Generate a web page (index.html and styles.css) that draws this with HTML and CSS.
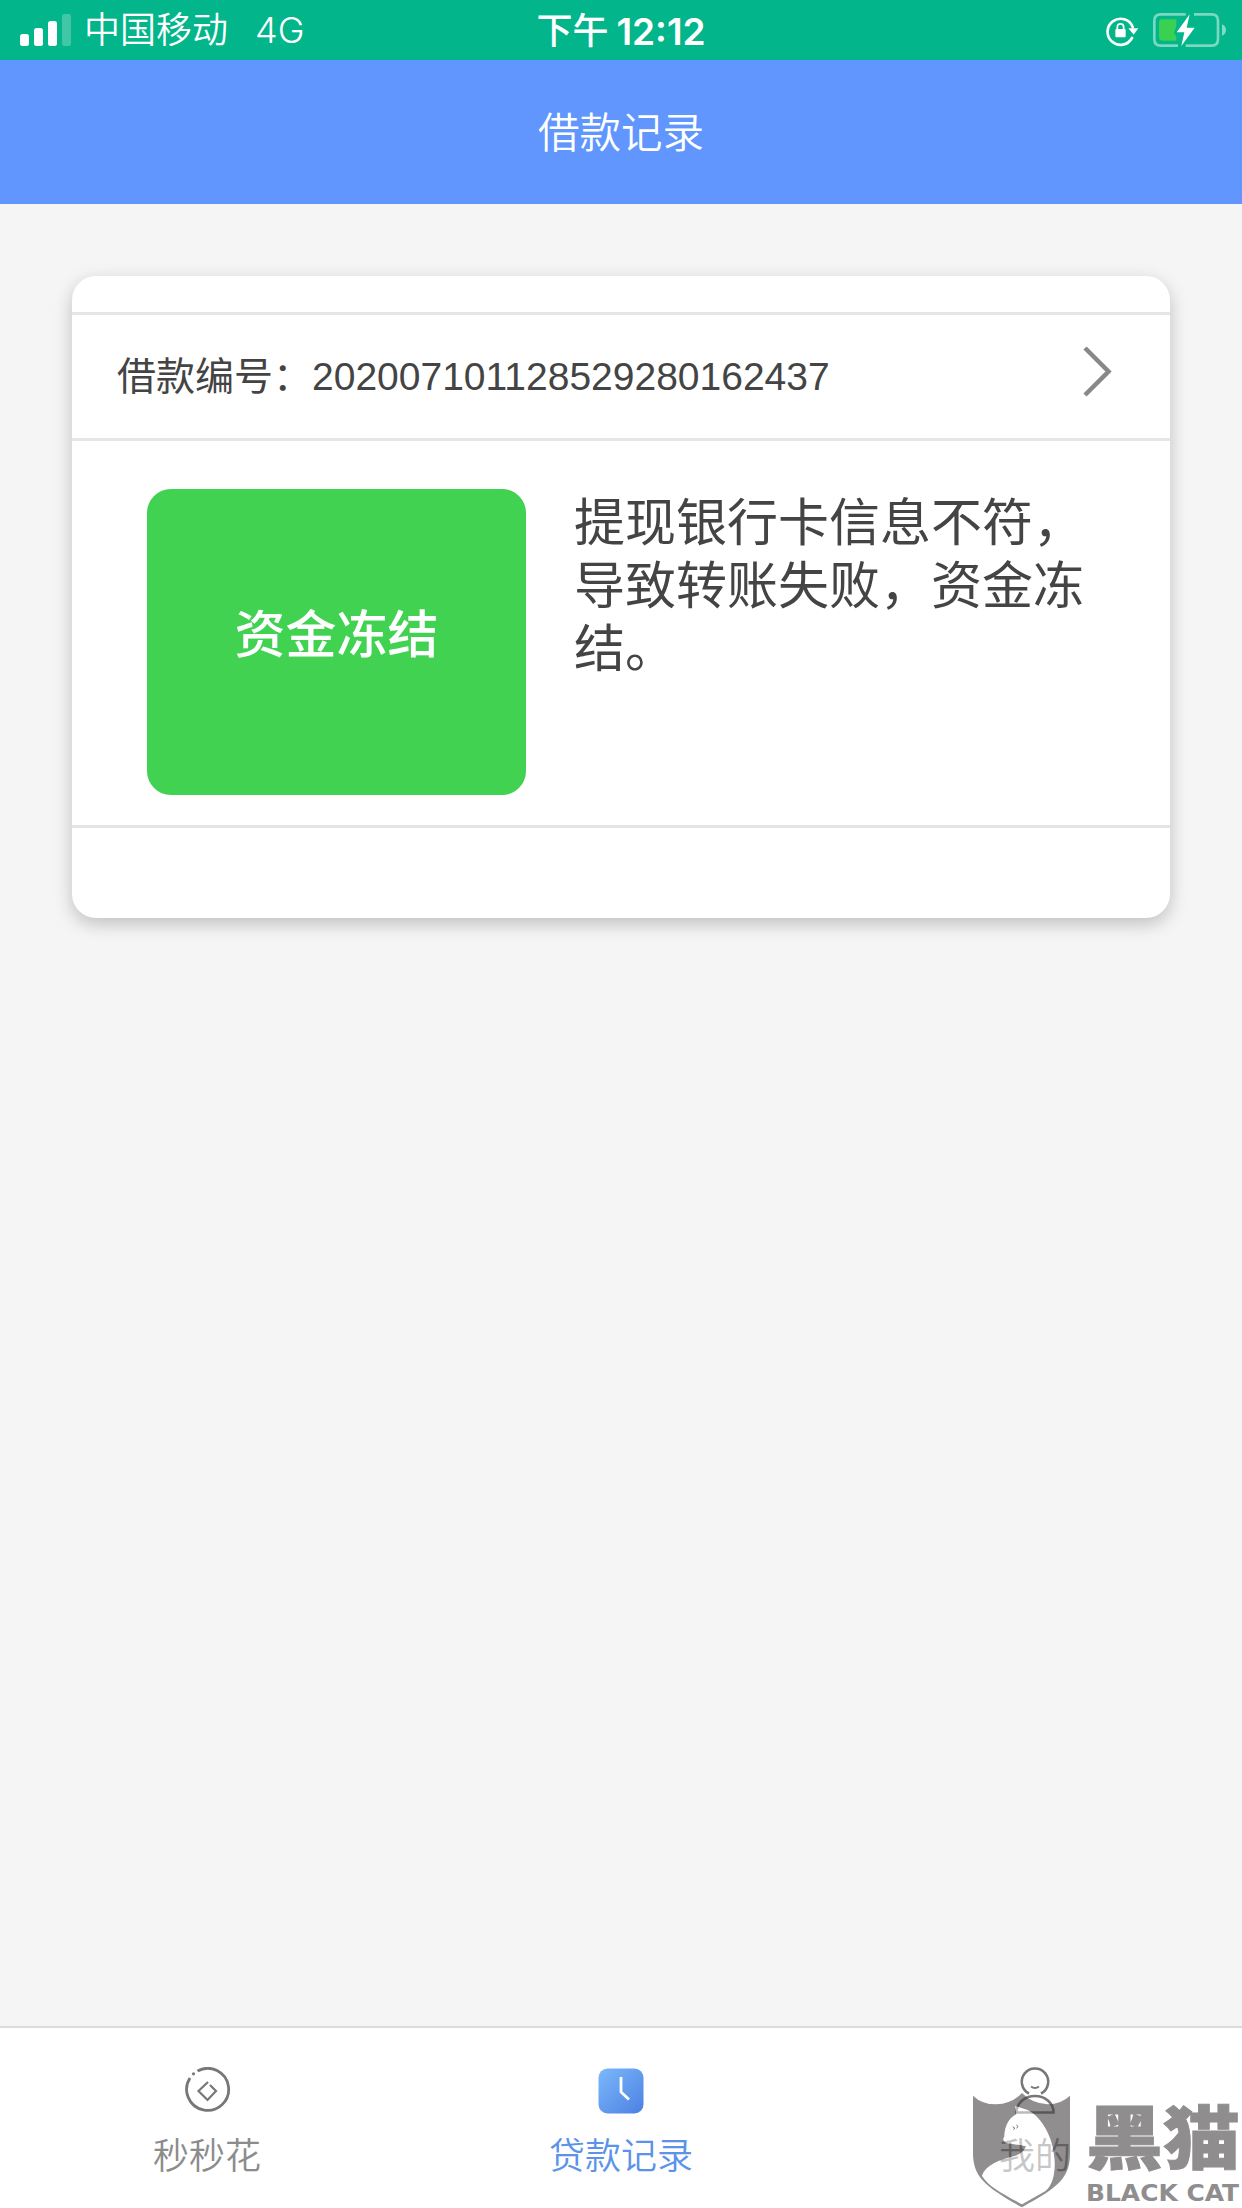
FILE: index.html
```html
<!DOCTYPE html>
<html lang="zh-CN">
<head>
    <meta charset="UTF-8">
    <title>借款记录</title>
    <link rel="stylesheet" href="styles.css">
</head>
<body>
    <div class="page">
        <!-- Status bar -->
        <div class="status">
            <div class="status-left">
                <svg class="signal" width="52" height="33" viewBox="0 0 52 33">
                    <rect x="0" y="20" width="9" height="12" rx="2.5" fill="#fff"/>
                    <rect x="14" y="14" width="9" height="18" rx="2.5" fill="#fff"/>
                    <rect x="28" y="7" width="9" height="25" rx="2.5" fill="#fff"/>
                    <rect x="42" y="0" width="9" height="32" rx="2.5" fill="#fff" fill-opacity=".25"/>
                </svg>
                <span class="carrier">中国移动</span>
                <span class="network">4G</span>
            </div>
            <div class="status-time"><span>下午</span><b>12:12</b></div>
            <div class="status-right">
                <svg width="35" height="34" viewBox="72 42 105 102">
                    <path d="M156 117A39 39 0 1 1 158 84" fill="none" stroke="#fff" stroke-width="8" stroke-linecap="round"/>
                    <path d="M145 88h30l-14 19z" fill="#fff"/>
                    <rect x="106" y="90" width="31" height="25" rx="3" fill="#fff"/>
                    <path d="M112 91v-7a9.500 9.500 0 0 1 19 0v7" fill="none" stroke="#fff" stroke-width="5"/>
                </svg>
                <svg width="75" height="36" viewBox="216 36 225 108">
                    <path d="M317 43H242q-19 0-19 19v56q0 19 19 19H294M342 43H395q19 0 19 19v56q0 19-19 19H317" fill="none" stroke="#fff" stroke-opacity=".48" stroke-width="8"/>
                    <path d="M426 73q12 5 12 17t-12 17z" fill="#fff" fill-opacity=".5"/>
                    <path d="M247 58H289V78L282 100L289 109V122H247q-10 0-10-10V68q0-10 10-10z" fill="#3ad153"/>
                    <path d="M329 43L290 97H313L304 138L344 83H320z" fill="#fff"/>
                </svg>
            </div>
        </div>

        <div class="header">借款记录</div>

        <!-- Loan record -->
        <div class="content">
            <div class="card">
                <div class="card-top"></div>
                <div class="card-number">
                    <span>借款编号&#65306;202007101128529280162437</span>
                    <svg class="arrow" width="32" height="54" viewBox="0 0 32 54">
                        <path d="M3 4L26.500 27.500L3 51" fill="none" stroke="#888" stroke-width="4.500"/>
                    </svg>
                </div>
                <div class="card-body">
                    <div class="state">资金冻结</div>
                    <div class="message">提现银行卡信息不符&#65292;导致转账失败&#65292;资金冻结。</div>
                </div>
                <div class="card-bottom"></div>
            </div>
        </div>

        <!-- Bottom tabs -->
        <div class="tabs">
            <div class="tab">
                <svg width="48" height="48" viewBox="0 0 48 48" fill="none" stroke="#777">
                    <path d="M14.500 4A21 21 0 1 1 7 11" stroke-width="2.800"/>
                    <circle cx="10.500" cy="6.800" r="1.600" fill="#777" stroke="none"/>
                    <path d="M25 15L15.500 24L24.500 33L33 24L27 18" stroke-width="2.200"/>
                </svg>
                <span>秒秒花</span>
            </div>
            <div class="tab active">
                <svg width="48" height="48" viewBox="0 0 48 48">
                    <defs>
                        <linearGradient id="clock" x1="0" y1="0" x2="1" y2="1">
                            <stop offset="0" stop-color="#7bb9fb"/>
                            <stop offset="1" stop-color="#4d80e3"/>
                        </linearGradient>
                    </defs>
                    <rect x="1.500" y="1.500" width="45" height="45" rx="9" fill="url(#clock)"/>
                    <path d="M24 10V25L32 32.500" fill="none" stroke="#fff" stroke-width="2.800"/>
                </svg>
                <span>贷款记录</span>
            </div>
            <div class="tab">
                <svg width="48" height="48" viewBox="0 0 48 48" fill="none" stroke="#777" stroke-width="2.600">
                    <path d="M18 26.500A13.200 13.200 0 1 1 30 26.500"/>
                    <path d="M20 19.500q4 3 8 0" stroke-width="1.800"/>
                    <path d="M5.500 45A18.500 16 0 0 1 42.500 45V45.500H5.500z"/>
                </svg>
                <span>我的</span>
            </div>
        </div>

        <!-- Black Cat stamp, sits over the last tab -->
        <div class="stamp">
            <svg class="shield" width="100" height="116" viewBox="96 246 300 348">
                <path fill-rule="evenodd" d="M99 257Q125 283 169 283Q217 280 246 249Q275 280 323 283Q364 282 390 257V430C390 505 354 532 246 592C138 532 99 502 99 430zM226 288L262 300C310 323 344 393 344 462C344 500 334 529 316 543L246 583C187 550 145 529 126 497C138 464 178 450 224 438C243 432 253 422 258 409C239 403 211 404 195 397Q186 389 193 380C194 351 205 325 229 313z" fill="#464344" fill-opacity=".6"/>
                <path d="M226 288L262 300C310 323 344 393 344 462C344 500 334 529 316 543L246 583C187 550 145 529 126 497C138 464 178 450 224 438C243 432 253 422 258 409C239 403 211 404 195 397Q186 389 193 380C194 351 205 325 229 313z" fill="#fff" fill-opacity=".5"/>
                <path d="M218 350l7 5-5 3M229 345l5 4-4 6" fill="none" stroke="#777" stroke-width="3"/>
            </svg>
            <div class="stamp-text">
                <div class="stamp-cn">黑猫</div>
                <svg width="155" height="28" viewBox="0 0 155 28">
                    <text class="stamp-en" x="0" y="21" textLength="153" lengthAdjust="spacingAndGlyphs">BLACK CAT</text>
                </svg>
            </div>
        </div>
    </div>
</body>
</html>
```
FILE: styles.css
```css
body {
    margin: 0;
    background: #f5f5f5;
    font-family: "Liberation Sans", "Noto Sans CJK SC", sans-serif;
    color: #444;
}
.page {
    position: relative;
    display: flex;
    flex-direction: column;
    height: 2208px;
    overflow: hidden;
}
svg { display: block; flex: none; }

.status {
    display: grid;
    grid-template-columns: 1fr auto 1fr;
    grid-template-rows: 60px;
    height: 60px;
    padding: 0 15px 0 20px;
    background: #02b58a;
    color: #fff;
    font-family: Inter, "Noto Sans CJK SC", sans-serif;
    font-size: 36px;
    line-height: 63px;
}
.status-left { display: flex; align-items: center; }
.carrier { margin-left: 12px; font-weight: 350; }
.network { margin-left: 27px; font-weight: 350; }
.status-time { display: flex; gap: 8px; margin-right: 5px; }
.status-time span { font-weight: 500; }
.status-time b { font-size: 37px; font-weight: 600; }
.status-right { display: flex; align-items: center; justify-content: flex-end; gap: 13px; }

.header {
    height: 144px;
    background: #6096fe;
    color: #fff;
    font-size: 41.5px;
    font-weight: 350;
    line-height: 147px;
    text-align: center;
}

.content { flex: 1; padding: 72px; }
.card {
    background: #fff;
    border-radius: 24px;
    box-shadow: 0 6px 18px rgba(0,0,0,0.22);
}
.card-top { height: 36px; }
.card-number {
    display: flex;
    justify-content: space-between;
    height: 123px;
    padding: 0 56px 0 45px;
    border-top: 3px solid #e5e5e5;
    font-size: 39px;
    line-height: 124px;
}
.arrow { margin-top: 29px; }
.card-body {
    display: flex;
    gap: 48px;
    height: 336px;
    padding: 48px 75px 0;
    border-top: 3px solid #e5e5e5;
    border-bottom: 3px solid #e5e5e5;
}
.state {
    flex: none;
    width: 379px;
    height: 306px;
    border-radius: 24px;
    background: #40d250;
    color: #fff;
    font-size: 51px;
    font-weight: 500;
    line-height: 293px;
    text-align: center;
}
.message {
    width: 521px;
    padding-top: 3px;
    font-size: 51px;
    line-height: 63px;
}
.card-bottom { height: 90px; }

.tabs {
    display: flex;
    height: 180px;
    background: #fff;
    border-top: 2px solid #dcdcdc;
}
.tab {
    flex: 1;
    display: flex;
    flex-direction: column;
    align-items: center;
    padding-top: 39px;
    color: #8c8c8c;
    font-size: 36px;
    line-height: 42px;
}
.tab span { margin-top: 21px; font-weight: 350; }
.tab.active { color: #5b93ea; }

.stamp {
    position: absolute;
    right: 0;
    bottom: 0;
    display: flex;
    gap: 14px;
    width: 270px;
    height: 116px;
}
.stamp-text { color: #908d8e; }
.stamp-cn {
    height: 88px;
    font-size: 77px;
    font-weight: 900;
    line-height: 88px;
    transform: scaleY(.9);
    transform-origin: 0 90%;
    -webkit-text-stroke: 1px #908d8e;
}
.stamp-en {
    fill: #908d8e;
    font-family: "DejaVu Sans", sans-serif;
    font-size: 23px;
    font-weight: bold;
}
```
